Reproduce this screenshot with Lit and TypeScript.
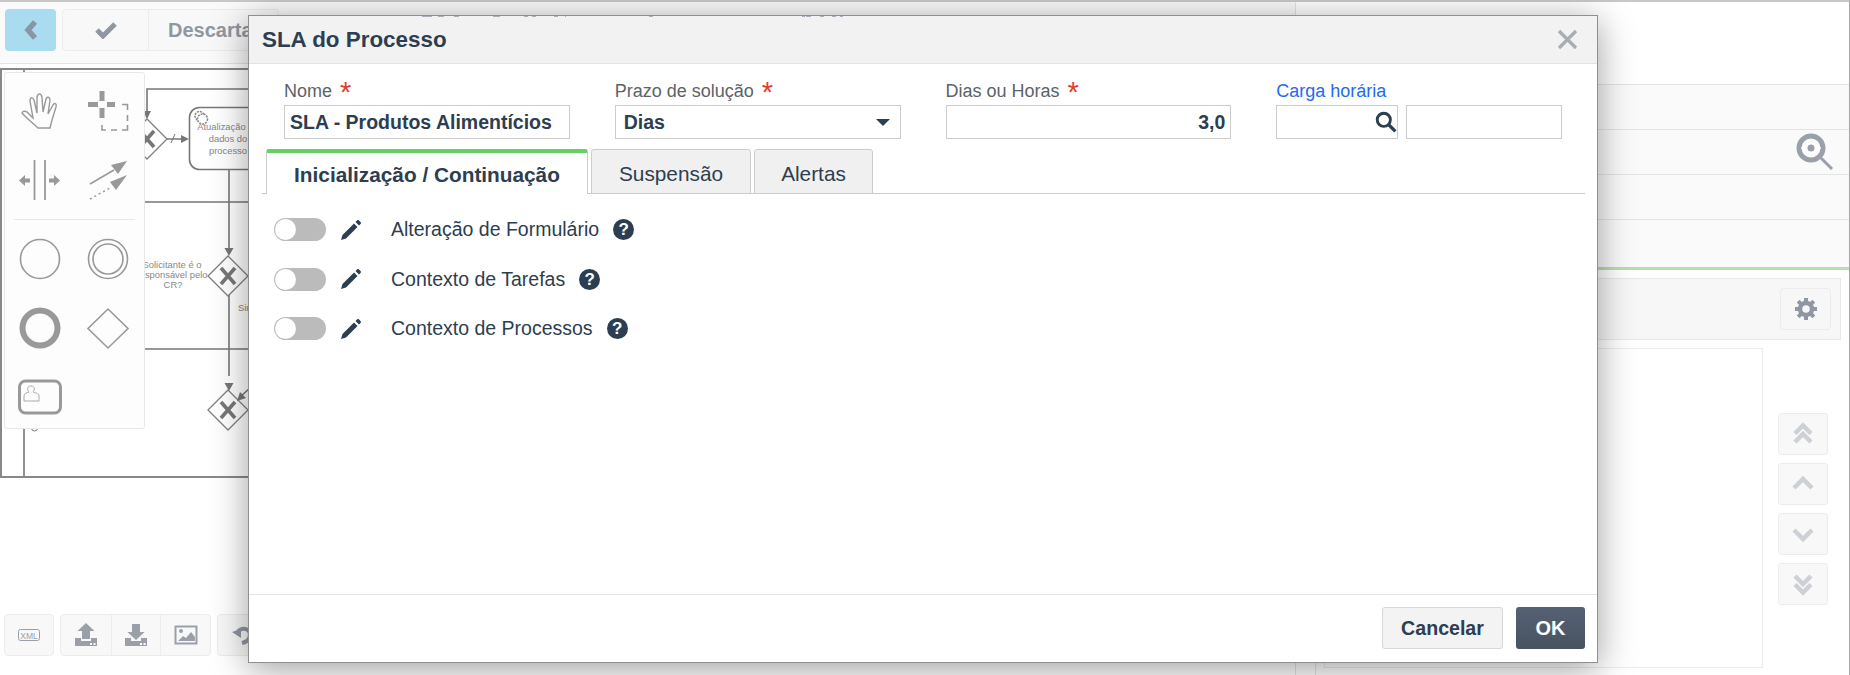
import { LitElement, html, css, svg } from "lit";
import { customElement } from "lit/decorators.js";

const marks = [[422,10],[438,6],[454,5],[493,7],[524,4],[532,4],[554,4],[565,1],[649,4],[802,3],[806,5],[820,4],[832,4],[840,3]];

const X = (cx: number, cy: number) => svg`<path d="M${cx-7} ${cy-8}L${cx+7} ${cy+8}M${cx+7} ${cy-8}L${cx-7} ${cy+8}" stroke="#777" stroke-width="3.600" fill="none"/>`;
const gateway = (cx: number, cy: number) => svg`<path d="M${cx} ${cy-20}L${cx+20} ${cy}L${cx} ${cy+20}L${cx-20} ${cy}Z" fill="#fff" stroke="#808080" stroke-width="1.300"/>${X(cx, cy)}`;
const head = (x: number, y: number) => svg`<path d="M${x} ${y}l-4.500 -8h9Z" fill="#777"/>`;

const rows = ["Alteração de Formulário", "Contexto de Tarefas", "Contexto de Processos"];

@customElement("app-root")
export class AppRoot extends LitElement {
  static styles = css`
    :host { display: block; position: relative; width: 1850px; height: 675px; overflow: hidden; background: #fff;
      font-family: "Liberation Sans", Arial, sans-serif; color: #2c3e50; }
    * { box-sizing: border-box; }
    svg { display: block; }
    .page { display: grid; grid-template-columns: 1296px 1fr; height: 675px; border-top: 2px solid #c8c8c8; border-right: 1px solid #aaa; }
    .left { display: flex; flex-direction: column; border-right: 1px solid #e4e4e4; }
    .topbar { height: 62px; background: #fafafa; border-bottom: 1px solid #e4e4e4; padding: 7px 5px; display: flex; gap: 6px; flex: none; }
    .back { width: 51px; height: 42px; border-radius: 4px; background: #a8dcee; display: flex; align-items: center; justify-content: center; }
    .group { display: flex; height: 42px; border: 1px solid #ececec; border-radius: 4px; background: #f8f8f8; }
    .cell { display: flex; align-items: center; justify-content: center; }
    .cell + .cell { border-left: 1px solid #ececec; }
    .check { width: 85px; }
    .discard { padding: 0 18px 0 19px; font-size: 20px; font-weight: 700; color: #8f97a3; }
    .canvas { margin-top: 4px; height: 410px; border: 2px solid #888; background: #fff; flex: none; }
    .bottom { margin-top: 136px; padding-left: 4px; display: flex; gap: 6px; }
    .b1 { width: 48px; }
    .b2 { width: 49.670px; }
    .right { display: flex; flex-direction: column; }
    .spacer { height: 82px; flex: none; }
    .rrow { height: 45px; background: #fafafa; border-top: 1px solid #e4e4e4; flex: none; display: flex; justify-content: flex-end; align-items: center; padding-right: 15px; }
    .rrow.last { height: 48px; }
    .green { height: 3px; background: #b5e0ad; flex: none; }
    .panel { flex: 1; margin: 8px 8px 0 19px; border-left: 1px solid #e4e4e4; display: flex; flex-direction: column; }
    .phead { height: 62px; background: #f7f7f7; border: 1px solid #e8e8e8; border-left: 0; padding: 9px 9px 0 0; display: flex; justify-content: flex-end; flex: none; }
    .gear { width: 51px; height: 42px; border: 1px solid #ececec; border-radius: 4px; display: flex; align-items: center; justify-content: center; }
    .pbody { display: flex; padding: 8px 0 0 8px; }
    .list { width: 439px; height: 320px; border: 1px solid #ececec; }
    .arrows { margin: 65px 0 0 15px; display: flex; flex-direction: column; gap: 8px; }
    .arrow { width: 50px; height: 42px; border: 1px solid #ececec; border-radius: 3px; background: #f8f8f8; display: flex; align-items: center; justify-content: center; }

    .palette { position: absolute; left: 4px; top: 72px; width: 141px; background: #fdfdfd; border: 1px solid #e8e8e8; border-radius: 3px; padding: 17px 13px 9px; }
    .pgrid { display: grid; grid-template-columns: 44px 44px; column-gap: 24px; row-gap: 24px; }
    .pgrid.two { row-gap: 25px; }
    .divider { height: 1px; background: #e8e8e8; margin: 17px -4px 17px -4px; }

    .marks { position: absolute; left: 0; top: 16px; z-index: 3; }
    .modal { position: absolute; z-index: 2; left: 248px; top: 15px; width: 1350px; height: 648px; background: #fff; border: 1px solid #8f8f8f; box-shadow: 0 6px 34px rgba(0,0,0,.38); display: flex; flex-direction: column; }
    .mhead { height: 48px; flex: none; background: #f2f2f2; border-bottom: 1px solid #e2e2e2; display: flex; align-items: center; justify-content: space-between; padding: 0 19px 0 13px; }
    .title { font-size: 22.400px; font-weight: 700; color: #2c3e50; }
    .fields { display: grid; grid-template-columns: repeat(4, 1fr); column-gap: 45px; padding: 16px 35px 0; }
    .label { height: 25px; font-size: 18px; line-height: 22px; color: #5c6368; white-space: nowrap; }
    .star { color: #e2402f; font-size: 29px; line-height: 20px; margin-left: 3px; vertical-align: -5px; }
    .blue { color: #2469f5; }
    .input { height: 34px; width: 100%; border: 1px solid #ccc; background: #fff; padding: 0 5px; font: 700 19.500px "Liberation Sans", Arial, sans-serif; color: #2c3e50; display: flex; align-items: center; outline: none; }
    .select { justify-content: space-between; padding: 0 10px 0 8px; }
    .caret { width: 0; height: 0; border-left: 7px solid transparent; border-right: 7px solid transparent; border-top: 7px solid #2c3e50; }
    .num { text-align: right; }
    .pair { display: flex; gap: 8px; }
    .lookup { width: 122px; flex: none; justify-content: flex-end; padding: 0 0 0 0; }
    .tabs { display: flex; gap: 3px; margin: 10px 12px 0 13px; padding-left: 4px; border-bottom: 1px solid #ccc; height: 45px; flex: none; }
    .tab { height: 45px; border: 1px solid #ccc; border-radius: 3px 3px 0 0; background: #f1f0f0; font-size: 20.800px; display: flex; align-items: center; justify-content: center; padding-top: 4px; }
    .tab.active { width: 322px; background: #fff; border-top: 4px solid #66cf66; border-bottom: 0; font-weight: 700; padding-top: 2px; }
    .t2 { width: 160px; }
    .t3 { width: 119px; }
    .rows { flex: 1; padding: 11px 0 0 25px; }
    .row { height: 49.500px; display: flex; align-items: center; font-size: 19.500px; }
    .toggle { width: 52px; height: 23px; border-radius: 12px; background: #bbb; flex: none; padding: 1px; }
    .knob { width: 21px; height: 21px; border-radius: 50%; background: #fff; }
    .pencil { margin: 0 30px 0 15px; flex: none; }
    .help { width: 21px; height: 21px; margin-left: 14px; border-radius: 50%; background: #2c3e50; color: #fff; font-size: 17px; font-weight: 700; line-height: 21px; text-align: center; flex: none; }
    .mfoot { height: 68px; flex: none; border-top: 1px solid #e4e4e4; padding: 12px 12px 0 0; display: flex; justify-content: flex-end; gap: 13px; }
    .btn { height: 42px; border-radius: 3px; font-weight: 700; display: flex; align-items: center; justify-content: center; }
    .cancel { width: 121px; font-size: 19.600px; background: #f3f3f3; border: 1px solid #d8d8d8; color: #2c3e50; }
    .ok { width: 69px; font-size: 20px; background: linear-gradient(#566274, #47535f); color: #fff; }
  `;

  private upload(down: boolean) {
    const arrow = down
      ? svg`<path d="M8 1h8v8h4.500L12 17 3.500 9H8Z" fill="#9aa0aa"/>`
      : svg`<path d="M12 0l8.500 8H16v8H8V8H3.500Z" fill="#9aa0aa"/>`;
    return html`<svg width="24" height="24" viewBox="0 0 24 24">${arrow}
      <path d="M1 15h6v3h10v-3h6v8H1Z" fill="#9aa0aa"/><rect x="16" y="20" width="2" height="2" fill="#fff"/><rect x="19.500" y="20" width="2" height="2" fill="#fff"/></svg>`;
  }

  private diagram() {
    return html`<svg width="1292" height="406" viewBox="2 70 1292 406">
      <g fill="none" stroke="#777" stroke-width="1.600">
        <path d="M24 68V80M24 420V478M147 118V89H300M167 139H182M145 202H300M229 169V250M229 295V376M145 349H300M250 388L240 397"/>
        <path d="M171 143L175 134" stroke-width="1"/>
        <rect x="189.500" y="107.500" width="78" height="62" rx="10"/>
      </g>
      <circle cx="34.500" cy="428" r="3" fill="none" stroke="#777" stroke-width="1"/>
      ${gateway(147, 139)}
      <path d="M147 119l-4 -8h8Z" fill="#777"/>
      <path d="M189 139l-8 -4v8Z" fill="#777"/>
      ${head(229, 256)}${gateway(228, 276)}
      ${head(229, 391)}${gateway(228, 410)}
      <path d="M237 401l3 -9 6 6Z" fill="#777"/>
      <g fill="none" stroke="#888" stroke-width="1.600">
        <circle cx="199.500" cy="116" r="4.500" stroke-dasharray="2 1"/>
        <circle cx="202.500" cy="119" r="5" fill="#fff" stroke-dasharray="2 1"/>
      </g>
      <g font-family="Liberation Sans, Arial, sans-serif" font-size="9.400" fill="#888" text-anchor="middle">
        <text x="228" y="130">Atualização de</text>
        <text x="228" y="142">dados do</text>
        <text x="228" y="154">processo</text>
        <text x="172" y="268">Solicitante é o</text>
        <text x="172" y="278">responsável pelo</text>
        <text x="173" y="288">CR?</text>
        <text x="246" y="311">Sim</text>
      </g>
    </svg>`;
  }

  private palette() {
    const s = "#999";
    const vb = (x: number, y: number, c: unknown) => html`<svg width="44" height="44" viewBox="${x} ${y} 44 44">${c}</svg>`;
    return html`<div class="palette">
      <div class="pgrid">
        ${vb(18, 90, svg`<path d="M38 128C32 122 26 118 22 113C23 110 27 111 29 114L33 118L30 101C30 97 33 97 34 100L37 113L37 97C38 93 41 93 42 97L43 112L46 99C47 96 50 97 50 100L48 114L53 105C55 102 57 104 56 107L52 120L50 128Z" fill="none" stroke="${s}" stroke-width="1.400"/>`)}
        ${vb(86, 90, svg`<path d="M88 104.500H98M107 104.500H115M102 91V101M102 108V118" stroke="${s}" stroke-width="5" fill="none"/>
          <path d="M122 104.500H127.500V110M127.500 115V121M127.500 125V130H122M117 130H111M106 130H102V125" stroke="${s}" stroke-width="1.600" fill="none"/>`)}
        ${vb(18, 158, svg`<path d="M34.500 160V200M45 160V200" stroke="${s}" stroke-width="1.800"/>
          <path d="M19 180.500L25 175V178.500H30V182.500H25V186ZM60 180.500L54 175V178.500H49V182.500H54V186Z" fill="${s}"/>`)}
        ${vb(86, 158, svg`<path d="M90 184L114 170" stroke="${s}" stroke-width="1.500"/><path d="M127 161L111 165L118 174Z" fill="${s}"/>
          <path d="M90 199L110 188" stroke="${s}" stroke-width="1.500" stroke-dasharray="2 3"/><path d="M127 175L110 182L116 190Z" fill="${s}"/>`)}
      </div>
      <div class="divider"></div>
      <div class="pgrid two">
        ${vb(18, 236, svg`<circle cx="40" cy="258" r="19.500" fill="none" stroke="${s}" stroke-width="1.600"/>`)}
        ${vb(86, 236, svg`<circle cx="108" cy="258" r="19.500" fill="none" stroke="${s}" stroke-width="1.600"/><circle cx="108" cy="258" r="15" fill="none" stroke="${s}" stroke-width="1.600"/>`)}
        ${vb(18, 305, svg`<circle cx="40" cy="327" r="17.500" fill="none" stroke="${s}" stroke-width="6"/>`)}
        ${vb(86, 305, svg`<path d="M108 308L128 327.500L108 347L88 327.500Z" fill="none" stroke="${s}" stroke-width="1.600"/>`)}
        ${vb(18, 374, svg`<rect x="19.500" y="380" width="41" height="32" rx="6" fill="none" stroke="${s}" stroke-width="3"/>
          <path d="M24 400V395C24 392 27 392 29 391C27 389 27 385 31 385C35 385 35 389 33 391C35 392 39 392 39 395V400Z" fill="none" stroke="#aaa" stroke-width="1"/>`)}
      </div>
    </div>`;
  }

  private chev(kind: string) {
    const paths: Record<string, string> = {
      uu: "M3 12.500L11 4.500 19 12.500M3 21L11 13 19 21",
      u: "M2 17L11 8 20 17",
      d: "M2 9L11 18 20 9",
      dd: "M3 5L11 13 19 5M3 13.500L11 21.500 19 13.500",
    };
    return html`<svg width="22" height="26" viewBox="0 0 22 26"><path d="${paths[kind]}" fill="none" stroke="#cdd0d5" stroke-width="4.500"/></svg>`;
  }

  render() {
    return html`
      <div class="page">
        <div class="left">
          <div class="topbar">
            <div class="back"><svg width="14" height="20" viewBox="0 0 14 20"><path d="M11 2L4 10 11 18" fill="none" stroke="#8a95a5" stroke-width="5.500"/></svg></div>
            <div class="group">
              <div class="cell check"><svg width="22" height="17" viewBox="0 0 22 17"><path d="M2 8L8 14 20 2" fill="none" stroke="#8f97a3" stroke-width="5"/></svg></div>
              <div class="cell discard">Descartar</div>
            </div>
          </div>
          <div class="canvas">${this.diagram()}</div>
          <div class="bottom">
            <div class="group"><div class="cell b1"><svg width="24" height="14" viewBox="0 0 24 14"><rect x="1.500" y="1.500" width="21" height="11" rx="2" fill="none" stroke="#9aa0aa" stroke-width="1"/><text x="12" y="10.500" text-anchor="middle" font-size="8.500" font-family="Liberation Sans, Arial, sans-serif" fill="#9aa0aa">XML</text></svg></div></div>
            <div class="group">
              <div class="cell b2">${this.upload(false)}</div>
              <div class="cell b2">${this.upload(true)}</div>
              <div class="cell b2"><svg width="24" height="20" viewBox="0 0 24 20"><rect x="1.500" y="1.500" width="21" height="17" fill="none" stroke="#9aa0aa" stroke-width="2"/><circle cx="7" cy="6" r="2" fill="#9aa0aa"/><path d="M4 16L9 11 12 13 17 7 21 12V16Z" fill="#9aa0aa"/></svg></div>
            </div>
            <div class="group"><div class="cell b2"><svg width="22" height="22" viewBox="0 0 22 22"><path d="M5 10C7 3 17 3 18 10C18 15 15 18 10 19" fill="none" stroke="#8f97a3" stroke-width="4"/><path d="M0 8L9 5V14Z" fill="#8f97a3"/></svg></div></div>
          </div>
        </div>
        <div class="right">
          <div class="spacer"></div>
          <div class="rrow"></div>
          <div class="rrow"><svg width="38" height="38" viewBox="0 0 38 38"><circle cx="15" cy="15" r="12" fill="none" stroke="#9aa0aa" stroke-width="5"/><path d="M5 15C9 8 21 8 25 15C21 22 9 22 5 15Z" fill="#fff"/><circle cx="15" cy="15" r="3.500" fill="#9aa0aa"/><path d="M25 25L36 36" stroke="#9aa0aa" stroke-width="3"/></svg></div>
          <div class="rrow"></div>
          <div class="rrow last"></div>
          <div class="green"></div>
          <div class="panel">
            <div class="phead"><div class="gear"><svg width="22" height="22" viewBox="0 0 22 22"><circle cx="11" cy="11" r="6" fill="none" stroke="#8f97a3" stroke-width="4.500"/><path d="M11 0V5M11 17V22M0 11H5M17 11H22M3.200 3.200L6.800 6.800M15.200 15.200L18.800 18.800M18.800 3.200L15.200 6.800M6.800 15.200L3.200 18.800" stroke="#8f97a3" stroke-width="4"/></svg></div></div>
            <div class="pbody">
              <div class="list"></div>
              <div class="arrows">
                ${["uu", "u", "d", "dd"].map((k) => html`<div class="arrow">${this.chev(k)}</div>`)}
              </div>
            </div>
          </div>
        </div>
      </div>

      ${this.palette()}

      <div class="modal">
        <div class="mhead">
          <div class="title">SLA do Processo</div>
          <svg width="21" height="21" viewBox="0 0 21 21"><path d="M2 2L19 19M19 2L2 19" stroke="#a8adb3" stroke-width="3.200"/></svg>
        </div>
        <div class="fields">
          <div><div class="label">Nome <span class="star">*</span></div><input class="input" .value=${"SLA - Produtos Alimentícios"} readonly /></div>
          <div><div class="label">Prazo de solução <span class="star">*</span></div><div class="input select">Dias<span class="caret"></span></div></div>
          <div><div class="label">Dias ou Horas <span class="star">*</span></div><input class="input num" .value=${"3,0"} readonly /></div>
          <div><div class="label blue">Carga horária</div><div class="pair">
            <div class="input lookup"><svg width="22" height="22" viewBox="0 0 20 20"><circle cx="8" cy="8" r="6" fill="none" stroke="#2c3e50" stroke-width="2.600"/><path d="M12.500 12.500L18.500 18.500" stroke="#2c3e50" stroke-width="3"/></svg></div>
            <input class="input" style="flex:1;min-width:0" readonly />
          </div></div>
        </div>
        <div class="tabs">
          <div class="tab active">Inicialização / Continuação</div>
          <div class="tab t2">Suspensão</div>
          <div class="tab t3">Alertas</div>
        </div>
        <div class="rows">
          ${rows.map((r) => html`<div class="row">
            <div class="toggle"><div class="knob"></div></div>
            <svg class="pencil" width="20" height="20" viewBox="0 0 20 20"><path d="M0 20L1.500 15 13 3.500 16.500 7 5 18.500ZM14.500 2L16 .5C17 -.2 17.500 0 18 .5L19.500 2C20.200 3 20 3.500 19.500 4L18 5.500Z" fill="#2c3e50"/></svg>
            <span>${r}</span>
            <span class="help">?</span>
          </div>`)}
        </div>
        <div class="mfoot">
          <div class="btn cancel">Cancelar</div>
          <div class="btn ok">OK</div>
        </div>
      </div>
      <svg class="marks" width="1850" height="2">
        ${marks.map(([x, w]) => svg`<rect x="${x}" y="0" width="${w}" height="1" fill="#a9b0bb"/>`)}
      </svg>
    `;
  }
}
